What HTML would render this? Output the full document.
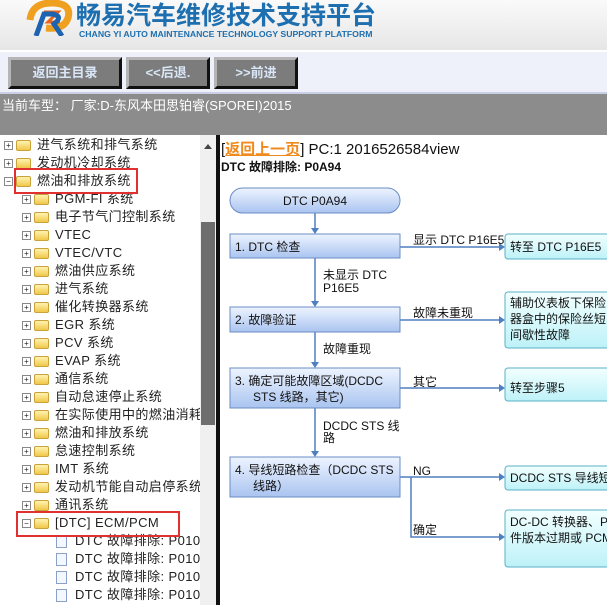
<!DOCTYPE html>
<html><head><meta charset="utf-8"><style>
*{margin:0;padding:0;box-sizing:border-box}
body{width:607px;height:605px;overflow:hidden;background:#fff;font-family:"Liberation Sans","Noto Sans CJK SC",sans-serif;position:relative}
.hdr{position:absolute;left:0;top:0;width:607px;height:50px;background:linear-gradient(#fafafa,#e6e6e6)}
.title{position:absolute;left:76px;top:-4px;font-size:25px;font-weight:bold;color:#1d6fb0;letter-spacing:0;font-family:"Liberation Sans","Noto Sans CJK SC",sans-serif}
.sub{position:absolute;left:79px;top:29px;font-size:8.7px;font-weight:bold;color:#1d6fb0}
.nav{position:absolute;left:0;top:50px;width:607px;height:44px;background:#eef1fa;border-top:2px solid #fff;border-bottom:2px solid #c9cfe6}
.btn{position:absolute;top:5px;height:32px;background:#7c7c7c;border-top:3px solid #b5b5b5;border-left:3px solid #b5b5b5;border-bottom:3px solid #111;border-right:3px solid #111;color:#d9e6f7;font-weight:bold;font-size:13px;text-align:center;line-height:26px}
.car{position:absolute;left:0;top:94px;width:607px;height:41px;background:#8c8c8c;color:#fff;font-size:13px;padding:1px 0 0 2px}
.left{position:absolute;left:0;top:135px;width:200px;height:470px;background:#fff;overflow:hidden}
.row{position:absolute;height:18px;font-size:13px;color:#222;white-space:nowrap;line-height:18px;letter-spacing:0.4px;font-family:"Liberation Sans","WenQuanYi Zen Hei",sans-serif}
.pm{display:inline-block;width:9px;height:9px;border:1px solid #888;font-size:8px;line-height:7px;text-align:center;vertical-align:middle;margin-right:3px;background:#fff;letter-spacing:0}
.fd{display:inline-block;width:15px;height:11px;background:linear-gradient(#fff3b0,#f0c84a);border:1px solid #c9a23a;border-radius:2px;vertical-align:middle;margin-right:6px}
.doc{display:inline-block;width:11px;height:13px;background:#f3f7ff;border:1px solid #8aa0c8;vertical-align:middle;margin-right:8px}
.sb{position:absolute;left:200px;top:135px;width:16px;height:470px;background:#f0f0f0}
.thumb{position:absolute;left:201px;top:222px;width:14px;height:203px;background:#6e6e6e}
.div{position:absolute;left:216px;top:135px;width:4px;height:470px;background:#111}
.redbox{position:absolute;border:2px solid #e03030}
</style></head><body>
<div class="hdr">
<svg style="position:absolute;left:24px;top:0" width="52" height="36"><path d="M6 20 Q8 2 30 3 Q48 4 44 18 Q40 30 22 28" fill="none" stroke="#f0a020" stroke-width="7"/><path d="M20 12 L34 12 L24 22 L36 22" fill="none" stroke="#e8641a" stroke-width="3"/><path d="M12 36 L20 14 L28 14 Q40 16 30 24 L38 36" fill="none" stroke="#1e63b0" stroke-width="5"/></svg>
<div class="title">畅易汽车维修技术支持平台</div>
<div class="sub">CHANG YI AUTO MAINTENANCE TECHNOLOGY SUPPORT PLATFORM</div>
</div>
<div class="nav">
<div class="btn" style="left:8px;width:114px">返回主目录</div>
<div class="btn" style="left:126px;width:84px">&lt;&lt;后退.</div>
<div class="btn" style="left:214px;width:84px">&gt;&gt;前进</div>
</div>
<div class="car">当前车型： 厂家:D-东风本田思铂睿(SPOREI)2015</div>
<div class="left">
<div class="row" style="left:4px;top:1px"><span class="pm">+</span><span class="fd"></span>进气系统和排气系统</div>
<div class="row" style="left:4px;top:19px"><span class="pm">+</span><span class="fd"></span>发动机冷却系统</div>
<div class="row" style="left:4px;top:37px"><span class="pm">−</span><span class="fd"></span>燃油和排放系统</div>
<div class="row" style="left:22px;top:55px"><span class="pm">+</span><span class="fd"></span>PGM-FI 系统</div>
<div class="row" style="left:22px;top:73px"><span class="pm">+</span><span class="fd"></span>电子节气门控制系统</div>
<div class="row" style="left:22px;top:91px"><span class="pm">+</span><span class="fd"></span>VTEC</div>
<div class="row" style="left:22px;top:109px"><span class="pm">+</span><span class="fd"></span>VTEC/VTC</div>
<div class="row" style="left:22px;top:127px"><span class="pm">+</span><span class="fd"></span>燃油供应系统</div>
<div class="row" style="left:22px;top:145px"><span class="pm">+</span><span class="fd"></span>进气系统</div>
<div class="row" style="left:22px;top:163px"><span class="pm">+</span><span class="fd"></span>催化转换器系统</div>
<div class="row" style="left:22px;top:181px"><span class="pm">+</span><span class="fd"></span>EGR 系统</div>
<div class="row" style="left:22px;top:199px"><span class="pm">+</span><span class="fd"></span>PCV 系统</div>
<div class="row" style="left:22px;top:217px"><span class="pm">+</span><span class="fd"></span>EVAP 系统</div>
<div class="row" style="left:22px;top:235px"><span class="pm">+</span><span class="fd"></span>通信系统</div>
<div class="row" style="left:22px;top:253px"><span class="pm">+</span><span class="fd"></span>自动怠速停止系统</div>
<div class="row" style="left:22px;top:271px"><span class="pm">+</span><span class="fd"></span>在实际使用中的燃油消耗</div>
<div class="row" style="left:22px;top:289px"><span class="pm">+</span><span class="fd"></span>燃油和排放系统</div>
<div class="row" style="left:22px;top:307px"><span class="pm">+</span><span class="fd"></span>怠速控制系统</div>
<div class="row" style="left:22px;top:325px"><span class="pm">+</span><span class="fd"></span>IMT 系统</div>
<div class="row" style="left:22px;top:343px"><span class="pm">+</span><span class="fd"></span>发动机节能自动启停系统</div>
<div class="row" style="left:22px;top:361px"><span class="pm">+</span><span class="fd"></span>通讯系统</div>
<div class="row" style="left:22px;top:379px"><span class="pm">−</span><span class="fd"></span>[DTC] ECM/PCM</div>
<div class="row" style="left:56px;top:397px"><span class="doc"></span>DTC 故障排除: P010</div>
<div class="row" style="left:56px;top:415px"><span class="doc"></span>DTC 故障排除: P010</div>
<div class="row" style="left:56px;top:433px"><span class="doc"></span>DTC 故障排除: P010</div>
<div class="row" style="left:56px;top:451px"><span class="doc"></span>DTC 故障排除: P010</div>
</div>
<div class="redbox" style="left:14px;top:168px;width:124px;height:26px"></div>
<div class="redbox" style="left:16px;top:511px;width:164px;height:26px"></div>
<div class="sb"></div>
<div style="position:absolute;left:204px;top:144px;width:0;height:0;border-left:4px solid transparent;border-right:4px solid transparent;border-bottom:5px solid #444"></div>
<div class="thumb"></div>
<div class="div"></div>
<div style="position:absolute;left:221px;top:138px;font-size:15px;color:#111;white-space:nowrap">[<span style="color:#f08a1c;text-decoration:underline;font-weight:bold">返回上一页</span>] PC:1 2016526584view</div>
<div style="position:absolute;left:221px;top:158px;font-size:12px;font-weight:bold;color:#111">DTC 故障排除: P0A94</div>
<svg style="position:absolute;left:220px;top:170px" width="387" height="435" font-family="Liberation Sans,Noto Sans CJK SC,sans-serif" font-size="12">
<defs><linearGradient id="g" x1="0" y1="0" x2="0" y2="1"><stop offset="0" stop-color="#eef4ff"/><stop offset="1" stop-color="#a9c4f0"/></linearGradient>
<linearGradient id="c" x1="0" y1="0" x2="0" y2="1"><stop offset="0" stop-color="#f3ffff"/><stop offset="1" stop-color="#bdf2f8"/></linearGradient></defs>
<g transform="translate(-220,-170)">
<g stroke="#4f7fc0" stroke-width="1.5" fill="none">
<line x1="315" y1="213" x2="315" y2="232"/><line x1="315" y1="258" x2="315" y2="305"/><line x1="315" y1="332" x2="315" y2="366"/><line x1="315" y1="408" x2="315" y2="455"/>
<line x1="400" y1="247" x2="503" y2="247"/><line x1="400" y1="320" x2="503" y2="320"/><line x1="400" y1="388" x2="503" y2="388"/><line x1="400" y1="477" x2="503" y2="477"/>
<polyline points="411,477 411,537 503,537"/>
</g>
<g fill="#4f7fc0"><path d="M311 228 L319 228 L315 234Z"/><path d="M311 301 L319 301 L315 307Z"/><path d="M311 362 L319 362 L315 368Z"/><path d="M311 451 L319 451 L315 457Z"/>
<path d="M499 243 L505 247 L499 251Z"/><path d="M499 316 L505 320 L499 324Z"/><path d="M499 384 L505 388 L499 392Z"/><path d="M499 473 L505 477 L499 481Z"/><path d="M499 533 L505 537 L499 541Z"/></g>
<g stroke="#6a8cc4" fill="url(#g)"><rect x="230" y="188" width="170" height="25" rx="12.5"/><rect x="230" y="234" width="170" height="24"/><rect x="230" y="307" width="170" height="25"/><rect x="230" y="368" width="170" height="40"/><rect x="230" y="457" width="170" height="40"/></g>
<g stroke="#5ab0c8" fill="url(#c)"><rect x="505" y="234" width="110" height="25" rx="3"/><rect x="505" y="292" width="110" height="56" rx="3"/><rect x="505" y="368" width="110" height="33" rx="3"/><rect x="505" y="466" width="110" height="24" rx="3"/><rect x="505" y="510" width="110" height="57" rx="3"/></g>
<g fill="#111">
<text x="315" y="205" text-anchor="middle">DTC P0A94</text>
<text x="235" y="251">1.  DTC 检查</text>
<text x="235" y="324">2.  故障验证</text>
<text x="235" y="385">3.  确定可能故障区域(DCDC</text><text x="253" y="401">STS 线路，其它)</text>
<text x="235" y="474">4.  导线短路检查（DCDC STS</text><text x="253" y="490">线路）</text>
<text x="413" y="244">显示 DTC P16E5</text>
<text x="323" y="279">未显示 DTC</text><text x="323" y="292">P16E5</text>
<text x="413" y="317">故障未重现</text>
<text x="323" y="353">故障重现</text>
<text x="413" y="386">其它</text>
<text x="323" y="430">DCDC STS 线</text><text x="323" y="442">路</text>
<text x="413" y="475">NG</text>
<text x="413" y="534">确定</text>
<text x="510" y="251">转至 DTC P16E5</text>
<text x="510" y="307">辅助仪表板下保险</text><text x="510" y="323">器盒中的保险丝短</text><text x="510" y="339">间歇性故障</text>
<text x="510" y="392">转至步骤5</text>
<text x="510" y="482">DCDC STS 导线短</text>
<text x="510" y="526">DC-DC 转换器、P</text><text x="510" y="542">件版本过期或 PCM</text>
</g></g></svg>
</body></html>
